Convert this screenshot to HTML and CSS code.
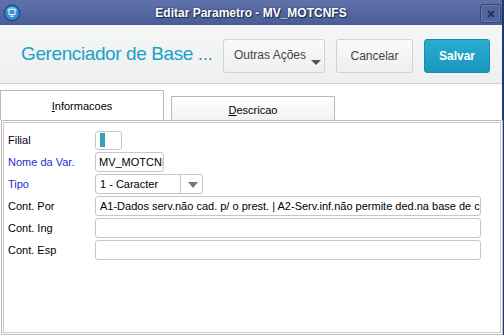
FILE: index.html
```html
<!DOCTYPE html>
<html lang="pt">
<head>
  <meta charset="UTF-8">
  <title>Editar Parametro - MV_MOTCNFS</title>
  <link rel="stylesheet" href="styles.css">
</head>
<body>
  <div class="window">
    <div class="titlebar">
      <svg class="app-icon" width="18" height="18" viewBox="0 0 18 18">
        <circle cx="9" cy="9" r="8.5" fill="#1f4f86"/>
        <circle cx="9" cy="9" r="7" fill="#2f8fd0"/>
        <ellipse cx="9" cy="6" rx="5" ry="3" fill="#8ecdf2" opacity="0.7"/>
        <rect x="5.5" y="5" width="7" height="6" fill="#e8f4fc" rx="0.5"/>
        <rect x="6.5" y="6" width="5" height="4" fill="#3a8fcf"/>
        <rect x="7.5" y="11.5" width="3" height="1.5" fill="#e8f4fc"/>
      </svg>
      <span class="title">Editar Parametro - MV_MOTCNFS</span>
      <div class="close-btn">
        <svg width="8" height="8" viewBox="0 0 8 8">
          <path d="M1 1 L7 7 M7 1 L1 7" stroke="#2a3550" stroke-width="2"/>
        </svg>
      </div>
    </div>

    <div class="toolbar">
      <h1>Gerenciador de Base ...</h1>
      <div class="actions">
        <button class="btn btn-menu">Outras Ações<span class="caret"></span></button>
        <button class="btn btn-cancel">Cancelar</button>
        <button class="btn btn-save">Salvar</button>
      </div>
    </div>

    <div class="tabs">
      <div class="tab active"><u>I</u>nformacoes</div>
      <div class="tab"><u>D</u>escricao</div>
    </div>

    <div class="panel">
      <div class="panel-inner">
        <div class="row">
          <label>Filial</label>
          <div class="field field-filial"><span class="cursor"></span></div>
        </div>
        <div class="row">
          <label class="req">Nome da Var.</label>
          <div class="field field-name">MV_MOTCNFS</div>
        </div>
        <div class="row">
          <label class="req">Tipo</label>
          <div class="field field-select">
            <span class="select-value">1 - Caracter</span>
            <span class="select-arrow"></span>
          </div>
        </div>
        <div class="row">
          <label>Cont. Por</label>
          <div class="field field-wide">A1-Dados serv.não cad. p/ o prest. | A2-Serv.inf.não permite ded.na base de cal</div>
        </div>
        <div class="row">
          <label>Cont. Ing</label>
          <div class="field field-wide"></div>
        </div>
        <div class="row">
          <label>Cont. Esp</label>
          <div class="field field-wide"></div>
        </div>
      </div>
    </div>
  </div>
</body>
</html>
```

FILE: styles.css
```css
body {
  margin: 0;
  background: #1f3b6c;
  font-family: "Liberation Sans", Arial, sans-serif;
  overflow: hidden;
}

.window {
  width: 502px;
  height: 335px;
  background: #fff;
}

.titlebar {
  height: 25px;
  background: linear-gradient(#6072aa, #4a5c96);
  display: flex;
  align-items: center;
  position: relative;
}

.app-icon {
  margin-left: 3px;
}

.title {
  position: absolute;
  left: 0;
  right: 0;
  text-align: center;
  color: #fff;
  font-size: 12px;
  font-weight: bold;
  text-shadow: 0 0 2px #1c2850, 1px 1px 1px #1c2850;
}

.close-btn {
  position: absolute;
  right: 1px;
  top: 4px;
  width: 19px;
  height: 17px;
  border: 1px solid #33446e;
  border-radius: 3px;
  background: #5264a0;
  box-shadow: inset 0 0 0 1px #6a7cb4;
  display: flex;
  align-items: center;
  justify-content: center;
}

.toolbar {
  height: 58px;
  background: linear-gradient(#f5f6f6, #eeeff0);
  border-bottom: 1px solid #d3d3d3;
  display: flex;
  align-items: center;
  padding: 0 12px 0 21px;
}

h1 {
  margin: 0;
  font-size: 19px;
  letter-spacing: -0.4px;
  font-weight: normal;
  color: #1ba0c8;
  white-space: nowrap;
  flex-shrink: 0;
}

.actions {
  display: flex;
  gap: 11px;
  margin: 3px 0 0 auto;
  flex-shrink: 0;
}

.btn {
  height: 34px;
  border: 1px solid #d2d2d2;
  border-radius: 3px;
  background: linear-gradient(#fafafa, #efefef);
  font-family: "Liberation Sans", Arial, sans-serif;
  font-size: 12px;
  color: #444;
  padding: 0;
  position: relative;
}

.btn-menu {
  width: 102px;
  text-align: left;
  padding: 0 0 2px 10px;
}

.caret {
  position: absolute;
  right: 3px;
  bottom: 7px;
  border-left: 5px solid transparent;
  border-right: 5px solid transparent;
  border-top: 5px solid #555;
}

.btn-cancel {
  width: 77px;
}

.btn-save {
  width: 66px;
  border-color: #1a8cb0;
  background: linear-gradient(#2aabd0, #1898bf);
  color: #fff;
  font-weight: bold;
}

.tabs {
  display: flex;
  align-items: flex-end;
  gap: 7px;
  height: 30px;
  margin-top: 6px;
}

.tab {
  width: 162px;
  height: 23px;
  border: 1px solid #b8b8b8;
  border-bottom: none;
  background: linear-gradient(#ffffff, #f2f2f2);
  font-size: 11px;
  color: #000;
  text-align: center;
  line-height: 26px;
}

.tab.active {
  height: 29px;
  background: #fff;
  line-height: 31px;
}

.panel {
  margin-left: 1px;
  width: 498px;
  height: 211px;
  border: 1px solid #bdbdbd;
  padding: 1px;
}

.panel-inner {
  height: 100%;
  box-sizing: border-box;
  border: 1px solid #cacaca;
  padding: 7px 0 0 4px;
  display: flex;
  flex-direction: column;
  gap: 2px;
}

.row {
  display: flex;
  align-items: center;
  height: 20px;
}

label {
  width: 87px;
  font-size: 11px;
  color: #000;
}

label.req {
  color: #2a2ad0;
}

.field {
  box-sizing: border-box;
  height: 20px;
  border: 1px solid #c6c6c6;
  border-radius: 3px;
  background: #fff;
  font-size: 11px;
  color: #000;
  line-height: 18px;
  padding-left: 4px;
  white-space: nowrap;
  overflow: hidden;
}

.field-filial {
  width: 27px;
  height: 19px;
  display: flex;
  align-items: center;
}

.cursor {
  width: 5px;
  height: 14px;
  background: #35a0b4;
}

.field-name {
  width: 69px;
  padding-left: 3px;
}

.field-select {
  width: 108px;
  display: flex;
  padding: 0;
}

.select-value {
  width: 80px;
  padding-left: 4px;
  border-right: 1px solid #c6c6c6;
}

.select-arrow {
  margin: 7px 0 0 7px;
  border-left: 5px solid transparent;
  border-right: 5px solid transparent;
  border-top: 6px solid #777;
  height: 0;
}

.field-wide {
  width: 386px;
}
```
